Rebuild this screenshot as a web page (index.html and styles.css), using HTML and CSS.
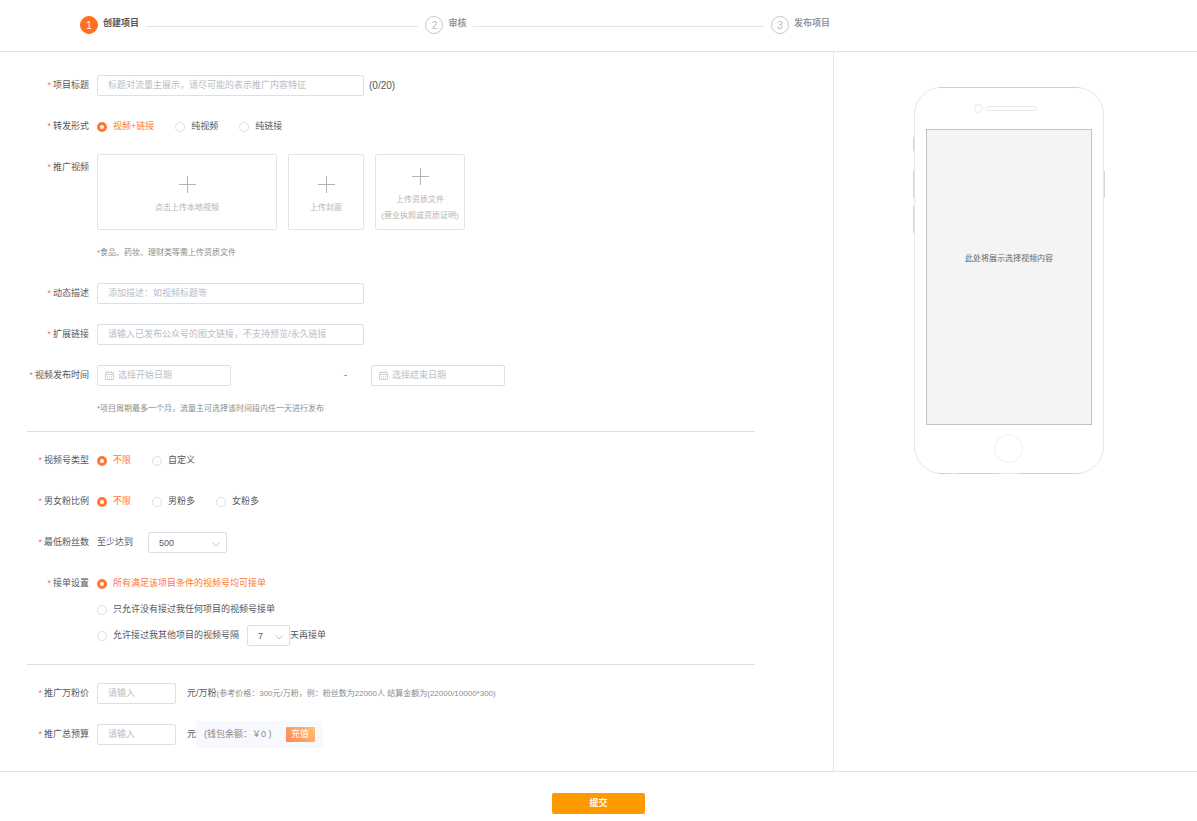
FILE: index.html
```html
<!DOCTYPE html>
<html lang="zh-CN">
<head>
<meta charset="utf-8">
<meta name="viewport" content="width=device-width, initial-scale=1">
<title>创建项目</title>
<link rel="stylesheet" href="styles.css">
</head>
<body>
<header class="header">
  <ol class="steps">
    <li class="step step-active"><span class="step-num">1</span><span class="step-title">创建项目</span><span class="step-line"></span></li>
    <li class="step"><span class="step-num">2</span><span class="step-title">审核</span><span class="step-line"></span></li>
    <li class="step step-last"><span class="step-num">3</span><span class="step-title">发布项目</span></li>
  </ol>
</header>

<form class="page">
  <div class="main">
    <div class="fields">
      <section class="section section-content">
        <div class="row">
          <label class="label" for="title">项目标题</label>
          <div class="field"><input class="input input-wide" id="title" type="text" placeholder="标题对流量主展示，请尽可能的表示推广内容特征"><span class="counter">(0/20)</span></div>
        </div>
        <div class="row">
          <span class="label" id="form-label">转发形式</span>
          <div class="field radios" role="radiogroup" aria-labelledby="form-label">
            <label class="radio"><input type="radio" name="form" checked><span>视频+链接</span></label>
            <label class="radio"><input type="radio" name="form"><span>纯视频</span></label>
            <label class="radio"><input type="radio" name="form"><span>纯链接</span></label>
          </div>
        </div>
        <div class="row row-upload">
          <span class="label">推广视频</span>
          <div>
            <div class="uploads">
              <button class="upload upload-video" type="button">
                <svg class="plus" viewBox="0 0 17 17" aria-hidden="true"><path d="M8.500 0v17M0 8.500h17"/></svg>
                <span>点击上传本地视频</span>
              </button>
              <button class="upload upload-cover" type="button">
                <svg class="plus" viewBox="0 0 17 17" aria-hidden="true"><path d="M8.500 0v17M0 8.500h17"/></svg>
                <span>上传封面</span>
              </button>
              <button class="upload upload-file" type="button">
                <svg class="plus" viewBox="0 0 17 17" aria-hidden="true"><path d="M8.500 0v17M0 8.500h17"/></svg>
                <span>上传资质文件<br>(营业执照或资质证明)</span>
              </button>
            </div>
            <p class="hint">*食品、药妆、理财类等需上传资质文件</p>
          </div>
        </div>
        <div class="row">
          <label class="label" for="desc">动态描述</label>
          <div class="field"><input class="input input-wide" id="desc" type="text" placeholder="添加描述：如视频标题等"></div>
        </div>
        <div class="row">
          <label class="label" for="link">扩展链接</label>
          <div class="field"><input class="input input-wide" id="link" type="text" placeholder="请输入已发布公众号的图文链接，不支持预览/永久链接"></div>
        </div>
        <div class="row">
          <label class="label" for="start">视频发布时间</label>
          <div>
            <div class="dates">
              <span class="date">
                <svg class="calendar" viewBox="0 0 9 9" aria-hidden="true"><path d="M.5 1.500h8v7h-8zM.5 3.500h8M2.500 0v2M6.500 0v2"/><path class="calendar-days" d="M2 5.500h1M4 5.500h1M6 5.500h1M2 7h1M4 7h1M6 7h1"/></svg>
                <input class="input" id="start" type="text" placeholder="选择开始日期">
              </span>
              <span class="dash">-</span>
              <span class="date">
                <svg class="calendar" viewBox="0 0 9 9" aria-hidden="true"><path d="M.5 1.500h8v7h-8zM.5 3.500h8M2.500 0v2M6.500 0v2"/><path class="calendar-days" d="M2 5.500h1M4 5.500h1M6 5.500h1M2 7h1M4 7h1M6 7h1"/></svg>
                <input class="input" type="text" placeholder="选择结束日期" aria-label="结束日期">
              </span>
            </div>
            <p class="hint">*项目周期最多一个月，流量主可选择该时间段内任一天进行发布</p>
          </div>
        </div>
      </section>

      <section class="section section-audience">
        <div class="row">
          <span class="label" id="type-label">视频号类型</span>
          <div class="field radios" role="radiogroup" aria-labelledby="type-label">
            <label class="radio"><input type="radio" name="type" checked><span>不限</span></label>
            <label class="radio"><input type="radio" name="type"><span>自定义</span></label>
          </div>
        </div>
        <div class="row">
          <span class="label" id="ratio-label">男女粉比例</span>
          <div class="field radios" role="radiogroup" aria-labelledby="ratio-label">
            <label class="radio"><input type="radio" name="ratio" checked><span>不限</span></label>
            <label class="radio"><input type="radio" name="ratio"><span>男粉多</span></label>
            <label class="radio"><input type="radio" name="ratio"><span>女粉多</span></label>
          </div>
        </div>
        <div class="row">
          <label class="label" for="fans">最低粉丝数</label>
          <div class="field">
            <span>至少达到</span>
            <span class="select select-fans">
              <select id="fans"><option>500</option></select>
              <svg class="chevron" viewBox="0 0 8 5" aria-hidden="true"><path d="M.5.5 4 4 7.500.5"/></svg>
            </span>
          </div>
        </div>
        <div class="row">
          <span class="label" id="order-label">接单设置</span>
          <div class="stack" role="radiogroup" aria-labelledby="order-label">
            <label class="radio"><input type="radio" name="order" checked><span>所有满足该项目条件的视频号均可接单</span></label>
            <label class="radio"><input type="radio" name="order"><span>只允许没有接过我任何项目的视频号接单</span></label>
            <div class="field">
              <label class="radio"><input type="radio" name="order"><span>允许接过我其他项目的视频号隔</span></label>
              <span class="select select-days">
                <select aria-label="间隔天数"><option>7</option></select>
                <svg class="chevron" viewBox="0 0 8 5" aria-hidden="true"><path d="M.5.5 4 4 7.500.5"/></svg>
              </span>
              <span>天再接单</span>
            </div>
          </div>
        </div>
      </section>

      <section class="section section-budget">
        <div class="row">
          <label class="label" for="price">推广万粉价</label>
          <div class="field"><input class="input input-short" id="price" type="text" placeholder="请输入"><span class="unit">元/万粉</span><span class="note">(参考价格：300元/万粉，例：粉丝数为22000人 结算金额为(22000/10000*300)</span></div>
        </div>
        <div class="row">
          <label class="label" for="budget">推广总预算</label>
          <div class="field"><input class="input input-short" id="budget" type="text" placeholder="请输入"><span class="unit">元</span>
            <div class="wallet"><span>(钱包余额：￥0 )</span><button class="recharge" type="button">充值</button></div>
          </div>
        </div>
      </section>
    </div>

    <aside class="preview">
      <div class="phone">
        <svg class="phone-frame" viewBox="0 0 192 388" aria-hidden="true">
          <rect x="1.500" y=".5" width="189" height="386" rx="27" fill="#fff" stroke="#e6e6e6"/>
          <path d="M26 .5h140M26 386.500h12M44 386.500h42M106 386.500h60" stroke="#d0d0d0"/>
          <path d="M.5 50v14M.5 84v27M.5 119v27M191.500 84v27" stroke="#d6d6d6"/>
          <circle cx="65.500" cy="21.500" r="4" fill="none" stroke="#e9e9e9"/>
          <rect x="73.500" y="19.500" width="50" height="4" rx="2" fill="none" stroke="#e9e9e9"/>
          <circle cx="95.500" cy="361.500" r="14" fill="none" stroke="#f0f0f0"/>
        </svg>
        <div class="screen">此处将展示选择视频内容</div>
      </div>
    </aside>
  </div>

  <footer class="footer"><button class="submit" type="submit">提交</button></footer>
</form>
</body>
</html>
```
FILE: styles.css
```css
* { box-sizing: border-box; }

body {
  margin: 0;
  background: #fff;
  color: #55585e;
  font: 9px/21px "Liberation Sans", "Noto Sans CJK SC", sans-serif;
}

input, button, select { font: inherit; color: inherit; margin: 0; }
button { cursor: pointer; }
p { margin: 0; }

/* Steps */
.header {
  padding: 16px 30.5% 17px 80px;
  border-bottom: 1px solid #e4e4e4;
}
.steps {
  display: flex;
  margin: 0;
  padding: 0;
  list-style: none;
}
.step {
  display: flex;
  flex: 1;
  align-items: flex-start;
  gap: 5px;
  color: #999;
}
.step-last { flex: 0 0 61px; }
.step-num {
  width: 18px;
  height: 18px;
  border: 1px solid #c8c8c8;
  border-radius: 50%;
  color: #bbb;
  font-size: 10px;
  line-height: 17px;
  text-align: center;
}
.step-title { font-weight: 700; line-height: 15px; }
.step-line {
  flex: 1;
  height: 1px;
  margin: 10px 7px 0 2px;
  background: #e4e4e4;
}
.step-active { color: #55585e; }
.step-active .step-num {
  border-color: #ff6f1e;
  background: #ff6f1e;
  color: #fff;
}

/* Layout */
.main {
  display: grid;
  grid-template-columns: 1fr 364px;
}
.fields { padding: 23px 78px 26px 27px; }
.section-audience {
  margin-top: 12px;
  padding-top: 18px;
  border-top: 1px solid #dcdfe6;
}
.section-budget {
  margin-top: 18px;
  padding-top: 18px;
  border-top: 1px solid #dcdfe6;
}
.row {
  display: grid;
  grid-template-columns: 62px 1fr;
  gap: 8px;
}
.row + .row { margin-top: 20px; }
.row + .row-upload { margin-top: 17px; }
.row-upload .label { padding-top: 3px; }
.label {
  text-align: right;
  white-space: nowrap;
}
.label::before {
  content: "*";
  margin-right: 2px;
  color: #f56c6c;
}
.field { display: flex; align-items: center; height: 21px; }

/* Controls */
.input {
  width: 100%;
  height: 21px;
  padding: 0 10px;
  border: 1px solid #dcdfe6;
  border-radius: 2px;
  background: #fff;
  outline: none;
}
.input::placeholder { color: #b9bdc6; opacity: 1; }
.input-wide { width: 267px; }
.input-short { width: 79px; }
.counter { margin-left: 5px; font-size: 10px; }

.radios { gap: 21px; }
.radio {
  display: flex;
  align-items: center;
  gap: 6px;
}
.radio input {
  appearance: none;
  width: 10px;
  height: 10px;
  border: 1px solid #dcdfe6;
  border-radius: 50%;
  background: #fff;
}
.radio input:checked { border: 3px solid #ff7733; }
.radio input:checked + span { color: #ff7733; }

.stack { display: grid; gap: 5px; justify-items: start; }

.select { position: relative; height: 21px; }
.select select {
  appearance: none;
  display: block;
  width: 100%;
  height: 21px;
  padding: 0 10px;
  border: 1px solid #dcdfe6;
  border-radius: 2px;
  background: #fff;
}
.select-fans { width: 79px; margin-left: 15px; }
.select-days { width: 43px; margin-left: 8px; }
.chevron {
  position: absolute;
  top: 10px;
  right: 7px;
  width: 8px;
  height: 5px;
  fill: none;
  stroke: #c0c4cc;
}

/* Uploads */
.uploads { display: flex; gap: 11px; }
.upload {
  display: flex;
  flex-direction: column;
  align-items: center;
  justify-content: center;
  gap: 7px;
  height: 76px;
  padding: 7px 0 0;
  border: 1px solid #e4e4e4;
  border-radius: 2px;
  background: #fff;
  color: #b4b4b4;
  font-size: 8px;
  line-height: 16px;
  white-space: nowrap;
}
.upload-video { width: 180px; }
.upload-cover { width: 76px; }
.upload-file { width: 90px; }
.plus { width: 17px; height: 17px; fill: none; stroke: #b4b4b4; }
.hint {
  margin-top: 12px;
  color: #8c8c8c;
  font-size: 8px;
}

/* Dates */
.dates { display: flex; height: 21px; }
.date { position: relative; width: 134px; }
.date .input { display: block; padding-left: 20px; }
.calendar {
  position: absolute;
  top: 6px;
  left: 8px;
  width: 9px;
  height: 9px;
  fill: none;
  stroke: #ccd0d8;
}
.calendar-days { stroke: #e3cfd2; }
.dash { width: 140px; padding-left: 89px; text-align: center; }

/* Budget */
.unit { margin-left: 11px; }
.note { color: #8c8c8c; font-size: 8px; white-space: nowrap; }
.wallet {
  display: flex;
  align-items: center;
  gap: 14px;
  height: 27px;
  padding: 0 8px;
  border-radius: 3px;
  background: #f8f9fe;
  color: #888;
}
.recharge {
  width: 29px;
  height: 15px;
  padding: 0;
  border: 0;
  border-radius: 1px;
  background: linear-gradient(45deg, #ff8558, #ffc170);
  color: #fff;
  line-height: 15px;
}

/* Phone preview */
.preview {
  display: flex;
  justify-content: center;
  align-items: flex-start;
  padding: 35px 13px 0 0;
  border-left: 1px solid #e4e4e4;
}
.phone {
  position: relative;
  width: 192px;
  padding: 42px 13px 50px;
}
.phone-frame {
  position: absolute;
  inset: 0;
  width: 192px;
  height: 388px;
}
.screen {
  position: relative;
  height: 296px;
  padding-top: 118px;
  border: 1px solid #c2c2c2;
  background: #f4f4f4;
  color: #666;
  font-size: 8px;
  text-align: center;
}

/* Submit */
.footer {
  display: flex;
  justify-content: center;
  padding: 21px 0 7px;
  border-top: 1px solid #e4e4e4;
}
.submit {
  width: 93px;
  height: 21px;
  padding: 0;
  border: 0;
  border-radius: 2px;
  background: #ff9900;
  color: #fff;
  font-weight: 700;
}
```
